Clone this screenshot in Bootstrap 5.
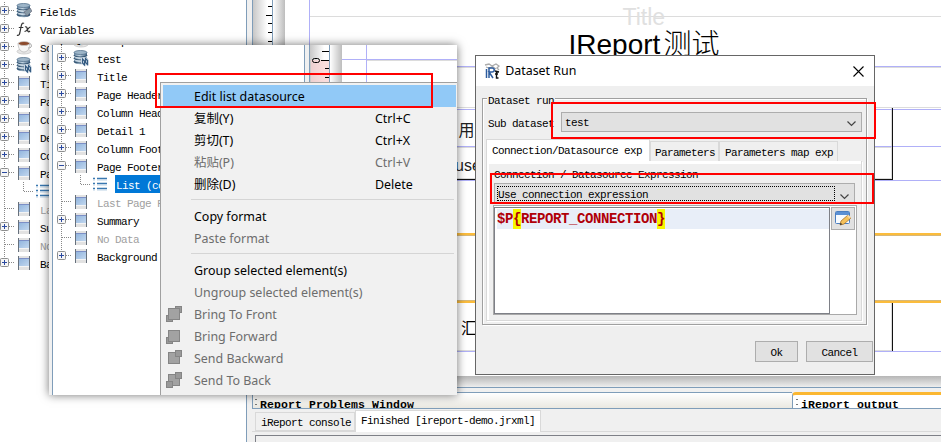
<!DOCTYPE html>
<html lang="en">
<head>
<meta charset="utf-8">
<title>iReport - Dataset Run</title>
<link href="https://cdn.jsdelivr.net/npm/bootstrap@5.3.0/dist/css/bootstrap.min.css" rel="stylesheet">
<style>
:root{--edge:#7f9db9;--face:#f0f0f0}
body{width:941px;height:442px;overflow:hidden;background:#fff;color:#000;font:11px/18px "Liberation Mono","Noto Sans CJK SC",monospace;letter-spacing:-.6px;white-space:nowrap}
svg{display:block;flex:none}
.workspace{width:941px;height:442px}
.tree-pane{width:247px;border-right:1px solid var(--edge);padding-top:2px}
.splitter{width:5px;background:var(--face)}
.tree-row{height:18px;flex:none}
.tree-row .lbl{padding:3px 0 0 0;height:18px;line-height:17px;margin-left:8px}
.tree-row .off{color:#a0a0a0}
.tree-row .sel{background:#0078d7;color:#fff;margin-left:6px;padding-left:1px;flex:1}
.shot{left:49px;top:45px;width:408px;height:350px;background:#fff;box-shadow:0 0 9px rgba(0,0,0,.55)}
.shot-tree{width:251px;padding-left:4px;margin-top:-14px;flex:none}
.shot-edge{width:4px;background:var(--face);border-right:1px solid var(--edge)}
.ctx{left:111px;top:37px;width:297px;height:313px;background:#f1f1f1;border:1px solid #a0a0a0;border-width:1px 0 0 1px;padding:2px 1px 0 2px;font:12.45px/22px "Noto Sans","Noto Sans CJK SC",sans-serif;letter-spacing:0}
.ctx-item{height:22px;padding:2px 0 0 3px}
.ctx-item .ic{width:28px;flex:none}
.ctx-item .ic svg{margin-top:-2px}
.ctx-item .key{width:81px}
.ctx-item.hot{background:#91c9f7}
.ctx-item.off{color:#6d6d6d}
.ctx-sep{height:10px;padding:4px 2px 0 28px}
.ctx-sep div{height:1px;background:#d5d5d5}
.right-side{width:689px}
.design{height:376px}
.under{height:11px;background:linear-gradient(#b6b6b6,#eee)}
.dock{height:55px;border-top:1px solid var(--edge);background:var(--face);padding-top:4px}
.dock-head{height:17px;border-top:1px solid var(--edge);border-bottom:1px solid var(--edge);background:linear-gradient(#fff,#eae8e1);overflow:hidden;font-weight:700;font-size:11.5px;letter-spacing:.1px;line-height:23px;border-left:1px solid var(--edge)}
.dock-a{width:540px;padding-left:7px}
.dock-b{flex:1;background:#fff;border-left:1px solid var(--edge);border-top:3px solid #fbb731;border-radius:4px 0 0 0;padding-left:8px;line-height:19px}
.dock-head span{position:relative}
.dock-head span::before{content:"";position:absolute;left:-5px;top:1px;width:2px;height:6px;border-top:1px solid #777;border-bottom:1px solid #777}
.dock-tabs{height:23px;border-bottom:1px solid #d9d9d9;padding:1px 0 0 3px;align-items:flex-end}
.dock-tab{height:19px;border:1px solid #d9d9d9;padding-left:5px;width:100px;line-height:21px}
.dock-tab.on{height:22px;background:#fff;width:186px;border-bottom:0;margin-bottom:-1px;line-height:21px}
.console{height:7px;margin:3px 0 0 3px;border-top:1px solid #7e8087;border-left:1px solid #7e8087}
.dlg{left:475px;top:55px;width:400px;height:320px;border:1px solid #666;background:#efefef}
.dlg-title{height:30px;background:#fff;padding:0 10px 0 8px;font:12.4px/30px "Noto Sans",sans-serif;letter-spacing:0}
.group{margin:12px 7px 0 6px;height:227px;border:1px solid #a0a0a0;box-shadow:1px 1px #fff,inset 1px 1px #fff;padding:0 4px}
.legend{height:13px;margin:-7px 0 0;font-size:11px;align-self:flex-start;width:auto;float:none}
.legend span{background:#efefef;display:block;height:14px;line-height:18px;padding:0 1px}
.combo{height:20px;background:#e1e1e1;border:1px solid #adadad;padding:0 5px 0 3px;line-height:21px}
.combo span{padding-top:2px}
.combo-a{width:301px}
.row-a{height:20px;margin-top:7px;padding-left:1px;line-height:24px}
.tabs{height:22px;margin:7px 0 0 -1px;align-items:flex-end}
.tab{height:20px;border:1px solid #d9d9d9;border-bottom:0;padding-left:4px;line-height:23px;width:69px}
.tab.on{height:23px;width:164px;padding-left:5px;background:#fff;margin-bottom:-1px}
.tab.map{width:119px;padding-left:5px}
.pane{height:160px;margin-left:-1px;border:1px solid #d9d9d9;border-top:0;background:#efefef;box-shadow:inset 0 3px #fff,inset 2px 0 #fff,1px 1px #fff;padding:3px 6px 0;width:376px}
.combo-b{margin:0 0 0 1px;width:361px;height:21px;padding:2px 5px 0 2px}
.focus{border:1px dotted #000;width:338px;height:15px;line-height:17px}
.cap{height:19px;line-height:22px;padding-left:1px}
.edit-wrap{margin-top:1px;height:110px;width:364px;border:1px solid #a9a9a9;background:#fff;padding:1px 1px 1px 0}
.editor{width:337px;height:107px;border:1px solid #7e8087;background:#fff;padding:1px 0 0 2px}
.code{height:20px;background:#e8eef8;color:#b00008;font-weight:700;font-size:14px;letter-spacing:-.4px;line-height:20px}
.code i{font-style:normal;background:#f7f700;display:inline-block;height:20px}
.pen{width:24px;height:23px;border:1px solid #adadad;background:#e1e1e1;margin-left:1px}
.actions{padding:16px 1px 0 0;gap:8px}
.plain{background:#e1e1e1;border:1px solid #adadad;height:21px;width:43px;text-align:center;line-height:22px}
.plain.wide{width:67px}
.hl{border:2px solid #f00;pointer-events:none}
.hl-1{left:155px;top:73px;width:278px;height:35px}
.hl-2{left:551px;top:102px;width:325px;height:37px}
.hl-3{left:490px;top:173px;width:384px;height:31px}
</style>
<script src="https://cdn.jsdelivr.net/npm/bootstrap@5.3.0/dist/js/bootstrap.bundle.min.js"></script>
</head>
<body>
<svg width="0" height="0" class="position-absolute"><defs>
<linearGradient id="gb" x1="0" y1="0" x2="1" y2="1"><stop offset="0" stop-color="#8fb3dc"/><stop offset="1" stop-color="#c4d9f0"/></linearGradient>
<linearGradient id="gd"><stop offset="0" stop-color="#5f7f9c"/><stop offset=".4" stop-color="#c3d5e3"/><stop offset="1" stop-color="#3e5f7f"/></linearGradient>
<linearGradient id="gr"><stop offset="0" stop-color="#c8c8c8"/><stop offset=".75" stop-color="#fff"/></linearGradient>
<linearGradient id="gs"><stop offset="0" stop-color="#fff"/><stop offset="1" stop-color="#bdbdbd"/></linearGradient>
<symbol id="page" viewBox="0 0 16 18"><path fill="#e2e2e2" d="M3 2h11v14H3z"/><path fill="url(#gb)" d="M3 4h11v8H3z"/><path fill="#7c8fc6" d="M3 4h11v1H3z"/><path stroke="#66707c" d="M2.500 2v14M13.500 2v14"/><path fill="#f4f4f4" d="M3 12h10v1H3z"/></symbol>
<symbol id="db" viewBox="0 0 16 18"><path fill="url(#gd)" d="M1 3v10c0 3 13 3 13 0V3z"/><ellipse cx="7.500" cy="3.500" rx="6.500" ry="2" fill="#9db5c8" stroke="#58758f" stroke-width=".8"/><path d="M1 6c0 2.600 13 2.600 13 0M1 9c0 2.600 13 2.600 13 0M1 12c0 2.600 13 2.600 13 0" fill="none" stroke="#365672" stroke-width="1.100"/><path d="M1 7c0 2.600 13 2.600 13 0M1 10c0 2.600 13 2.600 13 0" fill="none" stroke="#eef4f8" stroke-width=".7"/></symbol>
<symbol id="fields" viewBox="0 0 16 18"><use href="#db"/><path d="M8 10l6-4 2 3-5 5z" fill="#8799a6" stroke="#667" stroke-width=".6"/></symbol>
<symbol id="data" viewBox="0 0 16 18"><use href="#db"/><path d="M8 9l5-1 3 3v5l-5 1-3-3z" fill="#d9e4ed"/><path d="M9.500 10v4l2 2v-4zM12.500 9.500v4l2 2v-4z" fill="none" stroke="#345b82" stroke-width="1.200"/></symbol>
<symbol id="cup" viewBox="0 0 16 18"><ellipse cx="8" cy="13.500" rx="7" ry="2.500" fill="#e6e6e6" stroke="#bbb" stroke-width=".6"/><path d="M2 5c0 12 12 12 12 0z" fill="#f6f6f6" stroke="#aaa" stroke-width=".6"/><path d="M13 6c4-1 3 5-1 4" fill="none" stroke="#aaa"/><ellipse cx="8" cy="5.500" rx="5.500" ry="2" fill="#8c4a2c" stroke="#ccc" stroke-width=".7"/></symbol>
<symbol id="fx" viewBox="0 0 16 18"><path d="M8 3.500C6.500 2 5.500 4 5 7l-1.200 6c-.5 2-1.500 3-2.800 2M2.800 7.500h4.500M9 7c2-1 2 1 2.500 3s1 2.500 2.500 1M14.500 7c-2 0-3.500 4.500-6 4.500" fill="none" stroke="#333" stroke-width="1.200"/></symbol>
<symbol id="list" viewBox="0 0 16 18"><path stroke="#3a78b0" stroke-width="1.600" d="M0 3.500h2M4 3.500h10M0 8.500h2M4 8.500h10M0 13.500h2M4 13.500h10"/><path stroke="#bdd3e6" d="M0 5h2M4 5h10M0 10h2M4 10h10M0 15h2M4 15h10"/></symbol>
</defs></svg>

<div class="workspace d-flex position-relative overflow-hidden">
  <div class="tree-pane flex-shrink-0" id="mainTree"></div>
  <div class="splitter"></div>
  <div class="right-side d-flex flex-column">
    <svg class="design" width="689" height="376" viewBox="252 0 689 376">
      <path fill="url(#gr)" d="M253 0h19v376h-19z"/><path fill="url(#gs)" d="M273 0h12v376h-12z"/>
      <path stroke="#7f9db9" d="M252.500 0v376M272.500 0v376"/>
      <path stroke="#000" d="M268 6.500h4M266 15.500h6M268 23.500h4M268 32.500h4M268 41.500h4"/>
      <path stroke="#dcdcdc" d="M310 16.500h631M310 67.500h631M310 107.500h631M310 147.500h583M310 350.500h583M891.500 108v71M891.500 302v49M310 178.500h581"/>
      <path stroke="#b0b0f8" d="M309.500 0v376M310 66.500h631M310 109.500h631M310 146.500h631M310 180.500h631M310 351.500h631"/>
      <path stroke="#111" d="M310 179.500h583M892.500 108v72M892.500 302v49"/>
      <path fill="#fbbc3c" d="M310 233h631v2H310zM310 301h631v2H310z"/><path fill="#d7b878" d="M310 235h631v1H310zM310 300h631v1H310z"/>
      <g font-family="'Liberation Sans','Noto Sans CJK SC',sans-serif" letter-spacing="0">
      <text x="622.500" y="25" font-size="23" fill="#e0e0e0">Title</text>
      <text x="568.500" y="54" font-size="28">IReport<tspan x="663.500" font-weight="300">测试</tspan></text>
      <text x="458.500" y="136" font-size="16" fill="#222">用户</text>
      <text x="455" y="171" font-size="16" fill="#222">username</text>
      <text x="461" y="334" font-size="16" fill="#000">汇总</text></g>
    </svg>
    <div class="under"></div>
    <div class="dock">
      <div class="d-flex">
        <div class="dock-head dock-a"><span>Report Problems Window</span></div>
        <div class="dock-head dock-b"><span>iReport output</span></div>
      </div>
      <div class="dock-tabs d-flex"><div class="dock-tab">iReport console</div><div class="dock-tab on">Finished [ireport-demo.jrxml]</div></div>
      <div class="console"></div>
    </div>
  </div>

  <div class="shot position-absolute">
    <div class="w-100 h-100 d-flex overflow-hidden">
      <div class="shot-edge flex-shrink-0"></div>
      <div class="shot-tree" id="shotTree"></div>
      <svg width="153" height="37" viewBox="304 45 153 37">
        <path fill="#f0f0f0" d="M304 45h5v37h-5z"/><path fill="url(#gr)" d="M310 45h19v37h-19z"/><path fill="#f7d0d0" opacity=".75" d="M311 60h18v22h-18z"/><path fill="url(#gs)" d="M330 45h12v37h-12z"/>
        <path stroke="#7f9db9" d="M304.500 45v37M309.500 45v37M329.500 45v37"/>
        <path stroke="#000" d="M322 51.500h7M321 60.500h8M325 68.500h4M325 77.500h4"/><rect x="312.500" y="58.500" width="7" height="4" rx="2" fill="none" stroke="#000"/>
        <path stroke="#dcdcdc" d="M367 60.500h90"/><path stroke="#b0b0f8" d="M342 59.500h115M366.500 45v37"/>
      </svg>
    </div>
    <div class="ctx position-absolute" id="ctx"></div>
  </div>

  <div class="dlg position-absolute">
    <div class="dlg-title d-flex align-items-center">
      <svg width="16" height="16" viewBox="0 0 16 16"><path d="M1 2l4-1 3 2 4-2 3 2-2 2 2 2M2 4l3 1 4-1 3 2" fill="none" stroke="#aaa" stroke-width="1.300"/><path d="M2.500 15V6M5 15V5h3c3 0 3 4 0 4H5l4 6" fill="none" stroke="#2d5c9f" stroke-width="1.500"/><path d="M11 8l4 1M12.500 8v7h2M11 11h3" fill="none" stroke="#111" stroke-width="1.400"/></svg>
      <span class="ms-1 ps-0 flex-grow-1">&hairsp;Dataset Run</span>
      <svg width="11" height="11"><path d="M.5.500l10 10M10.500.500l-10 10" stroke="#000" stroke-width="1.100"/></svg>
    </div>
    <div class="group d-flex flex-column">
      <div class="legend"><span>Dataset run</span></div>
      <div class="row-a d-flex justify-content-between"><span>Sub dataset</span>
        <div class="combo combo-a d-flex justify-content-between align-items-center"><span>test</span><svg width="9" height="6" class="mt-1"><path d="M.5.500l4 4 4-4" fill="none" stroke="#444" stroke-width="1.200"/></svg></div></div>
      <div class="tabs d-flex"><div class="tab on">Connection/Datasource exp</div><div class="tab">Parameters</div><div class="tab map">Parameters map exp</div></div>
      <div class="pane">
        <div class="cap">Connection / Datasource Expression</div>
        <div class="combo combo-b d-flex justify-content-between"><div class="focus">Use connection expression</div><svg width="9" height="6" class="mt-2"><path d="M.5.500l4 4 4-4" fill="none" stroke="#444" stroke-width="1.200"/></svg></div>
        <div class="edit-wrap d-flex">
          <div class="editor"><div class="code">$P<i>{</i>REPORT_CONNECTION<i>}</i></div></div>
          <div class="pen d-flex align-items-center justify-content-center"><svg width="17" height="17" viewBox="0 0 17 17"><rect x=".5" y="1.500" width="14" height="12" rx="1" fill="#f7fbff" stroke="#4a7ec0"/><path fill="#5b90d4" d="M1 2h13v3H1z"/><path d="M5 15l1-4 7-6 3 3-7 6z" fill="#f6c25b" stroke="#a8742a" stroke-width=".8"/><path d="M5 15l.6-2.300 1.800 1.600z" fill="#333"/><path d="M12 6l1.500-1.200 2.500 2.700-1.200 1.200z" fill="#f2d9b0"/></svg></div>
        </div>
      </div>
    </div>
    <div class="actions d-flex justify-content-end"><div class="plain">Ok</div><div class="plain wide">Cancel</div></div>
  </div>

  <div class="hl hl-1 position-absolute"></div>
  <div class="hl hl-2 position-absolute"></div>
  <div class="hl hl-3 position-absolute"></div>
</div>
<script>
// rows: [expander, icon, label, state]
const rows = [
 ['+','fields','Fields'],['+','fx','Variables'],['+','cup','Scriptlets'],['+','data','test'],['+','page','Title'],
 ['+','page','Page Header'],['+','page','Column Header'],['+','page','Detail 1'],['+','page','Column Footer'],
 ['-','page','Page Footer'],['child','list','List (column)','sel'],['','page','Last Page Footer','off'],
 ['+','page','Summary'],['','page','No Data','off'],['+','page','Background']];
function expander(kind, last){
  const dash = 'stroke="#888" stroke-dasharray="1 1" fill="none"';
  if (kind === 'child') return `<svg width="36" height="18"><path ${dash} d="M4.500 0v18M23.500 0v9.500M24 9.500h10"/></svg>`;
  let s = `<svg width="16" height="18"><path ${dash} d="M4.500 0v${last?9:18}M5 8.500h10"/>`;
  if (kind) s += `<rect x=".5" y="4.500" width="8" height="8" rx="1" fill="#f6f6f6" stroke="#8e8f8f"/><path stroke="#2b4aa0" d="M2 8.500h5${kind==='+'?'M4.500 6v5':''}"/>`;
  return s + '</svg>';
}
function build(id, list){
  document.getElementById(id).innerHTML = list.map((r,i)=>`<div class="tree-row d-flex">${expander(r[0], i===list.length-1)}<svg width="16" height="18"><use href="#${r[1]}"/></svg><span class="lbl ${r[3]||''}">${r[2]}</span></div>`).join('');
}
build('mainTree', rows);
build('shotTree', rows.slice(2));
const sq = (x,y,s,c)=>`<rect x="${x+.5}" y="${y+.5}" width="${s}" height="${s}" fill="${c}" stroke="#858585"/>`;
const big = sq(2,2,11,'#a2a2a2');
const icons = {
 front: sq(9,0,6,'#999')+sq(0,9,6,'#999')+big, fwd: sq(0,9,6,'#999')+big,
 back: big+sq(9,0,6,'#999'), toback: big+sq(9,0,6,'#999')+sq(0,9,6,'#999')};
const menu = [['Edit list datasource','','hot'],['复制(Y)','Ctrl+C'],['剪切(T)','Ctrl+X'],['粘贴(P)','Ctrl+V','off'],['删除(D)','Delete'],0,
 ['Copy format',''],['Paste format','','off'],0,['Group selected element(s)',''],['Ungroup selected element(s)','','off'],
 ['Bring To Front','','off','front'],['Bring Forward','','off','fwd'],['Send Backward','','off','back'],['Send To Back','','off','toback']];
document.getElementById('ctx').innerHTML = menu.map(m=>m?`<div class="ctx-item d-flex align-items-center ${m[2]||''}"><span class="ic">${m[3]?`<svg width="16" height="16">${icons[m[3]]}</svg>`:''}</span><span class="flex-grow-1">${m[0]}</span><span class="key">${m[1]}</span></div>`:'<div class="ctx-sep"><div></div></div>').join('');
</script>
</body>
</html>
